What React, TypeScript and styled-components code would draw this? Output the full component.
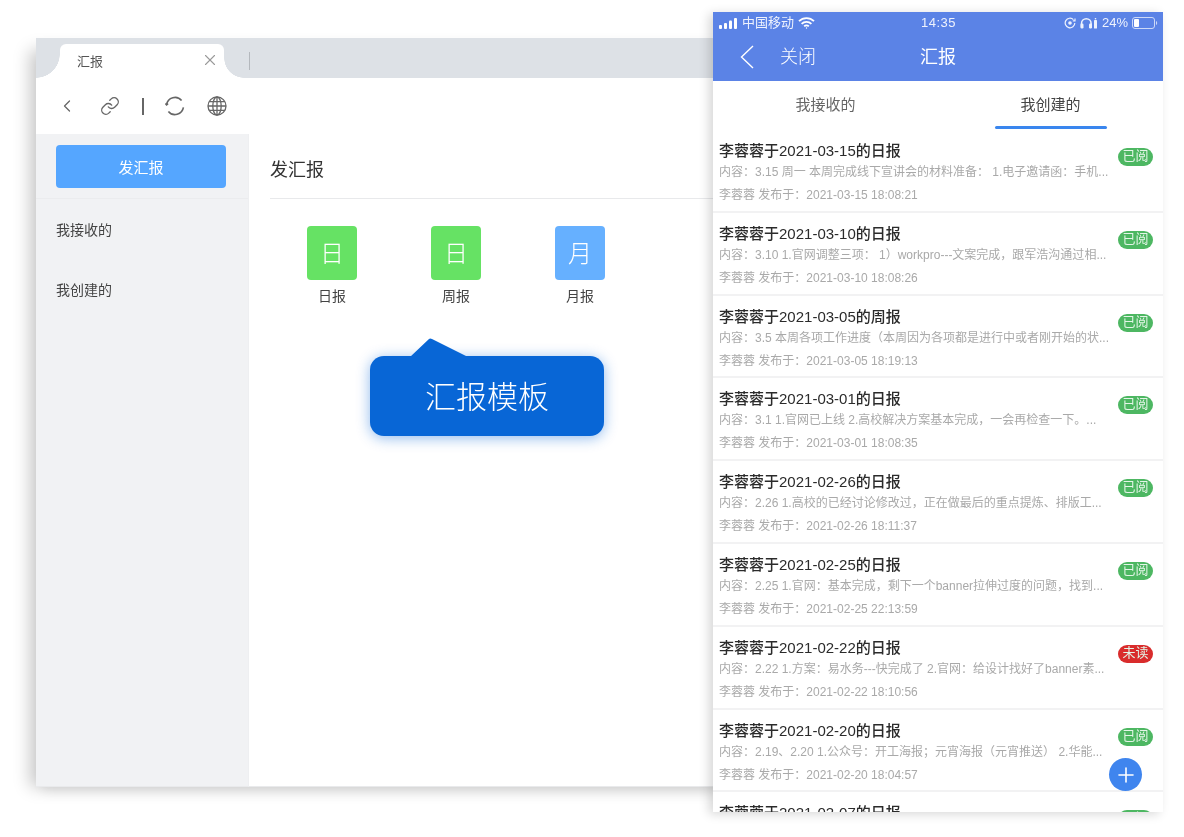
import { createGlobalStyle } from "styled-components";
import styled from "styled-components";
import { ChevronLeft, Link, Plus, X } from "lucide-react";

const SANS = `"Liberation Sans", "Noto Sans CJK SC", sans-serif`;

const GlobalStyle = createGlobalStyle`
  html, body {
    margin: 0;
    background: #fff;
    font-family: ${SANS};
  }
  * {
    box-sizing: border-box;
  }
`;

const Stage = styled.div`
  position: relative;
  width: 1184px;
  height: 837px;
  overflow: hidden;
  background: #fff;
  filter: blur(0.35px);
`;

const DesktopWindow = styled.div`
  position: absolute;
  left: 36px;
  top: 38px;
  width: 700px;
  height: 749px;
  display: flex;
  flex-direction: column;
  background: #fff;
  box-shadow: -12px 6px 16px -6px rgba(0, 0, 0, 0.22), 0 12px 12px -8px rgba(0, 0, 0, 0.07);
`;

const TabStrip = styled.div`
  height: 40px;
  flex: none;
  display: flex;
  align-items: flex-end;
  padding-left: 24px;
  background: #dde1e6;
`;

const Tab = styled.div`
  position: relative;
  width: 164px;
  height: 34px;
  display: flex;
  align-items: center;
  justify-content: space-between;
  padding: 0 5px 2px 17px;
  background: #fff;
  border-radius: 6px 6px 0 0;
  font-size: 13px;
  color: #555;

  &::before,
  &::after {
    content: "";
    position: absolute;
    bottom: 0;
  }
  &::before {
    left: -24px;
    width: 24px;
    height: 24px;
    background: radial-gradient(circle at 0 0, #dde1e6 23.5px, #fff 24px);
  }
  &::after {
    right: -20px;
    width: 20px;
    height: 20px;
    background: radial-gradient(circle at 100% 0, #dde1e6 19.5px, #fff 20px);
  }
`;

const TabDivider = styled.div`
  width: 1px;
  height: 18px;
  margin: 0 0 8px 25px;
  background: #b4b8bd;
`;

const ToolBar = styled.div`
  height: 56px;
  flex: none;
  display: flex;
  align-items: center;
  padding-left: 21px;
  color: #666;
`;

const ToolSlot = styled.div<{ $width: number }>`
  width: ${({ $width }) => $width}px;
  display: flex;
  align-items: center;
`;

const ToolBarRule = styled.div`
  width: 2px;
  height: 17px;
  background: #666;
`;

const Body = styled.div`
  flex: 1;
  display: flex;
  min-height: 0;
`;

const SideBar = styled.aside`
  width: 213px;
  flex: none;
  background: #f1f2f4;
  border-right: 1px solid #eeeff1;
  border-bottom: 1px solid #e9eaec;
`;

const SendZone = styled.div`
  height: 65px;
  padding: 11px 22px 0 20px;
  border-bottom: 1px solid #ebecee;
`;

const SendButton = styled.div`
  height: 43px;
  display: flex;
  align-items: center;
  justify-content: center;
  background: #55a6ff;
  border-radius: 4px;
  color: #fff;
  font-size: 15px;
`;

const SideList = styled.div`
  display: flex;
  flex-direction: column;
  padding: 0 20px;
`;

const SideItem = styled.div`
  height: 60px;
  display: flex;
  align-items: center;
  font-size: 14px;
  color: #444;
`;

const Main = styled.main`
  flex: 1;
  padding: 0 0 0 21px;
  border-bottom: 1px solid #e9eaec;
`;

const MainTitle = styled.h2`
  height: 65px;
  margin: 0;
  padding-top: 3px;
  display: flex;
  align-items: center;
  font-size: 18px;
  font-weight: 400;
  color: #333;
  border-bottom: 1px solid #e8e9eb;
`;

const TemplateRow = styled.div`
  display: flex;
  gap: 74px;
  padding: 27px 0 0 37px;
`;

const Template = styled.div`
  width: 50px;
  display: flex;
  flex-direction: column;
  align-items: center;
  gap: 6px;
`;

const TemplateIcon = styled.div<{ $color: string }>`
  width: 50px;
  height: 54px;
  padding-bottom: 3px;
  display: flex;
  align-items: center;
  justify-content: center;
  background: ${({ $color }) => $color};
  border-radius: 4px;
  color: #fff;
  font-size: 24px;
  font-weight: 300;
`;

const TemplateLabel = styled.div`
  font-size: 14px;
  line-height: 20px;
  color: #444;
`;

const Callout = styled.div`
  position: absolute;
  left: 370px;
  top: 356px;
  width: 234px;
  height: 80px;
  padding-bottom: 3px;
  display: flex;
  align-items: center;
  justify-content: center;
  background: #0866d6;
  border-radius: 14px;
  box-shadow: 0 2px 14px rgba(8, 102, 214, 0.45);
  color: #fff;
  font-size: 31px;
  font-weight: 300;
`;

const CalloutTail = styled.svg`
  position: absolute;
  left: 40px;
  top: -18px;
`;

const Phone = styled.div`
  position: absolute;
  left: 713px;
  top: 12px;
  width: 450px;
  height: 800px;
  display: flex;
  flex-direction: column;
  overflow: hidden;
  background: #fff;
  box-shadow: -4px 2px 10px rgba(0, 0, 0, 0.16);
`;

const PhoneHeader = styled.header`
  height: 69px;
  flex: none;
  display: flex;
  flex-direction: column;
  background: #5b83e6;
  color: #fff;
`;

const StatusBar = styled.div`
  height: 21px;
  display: grid;
  grid-template-columns: 1fr 1fr 1fr;
  align-items: center;
  padding: 1px 5px 0 6px;
  font-size: 13px;
  line-height: 16px;
  color: #eef2fd;
`;

const StatusGroup = styled.div<{ $end?: boolean }>`
  display: flex;
  align-items: center;
  gap: 4px;
  justify-content: ${({ $end }) => ($end ? "flex-end" : "flex-start")};
`;

const Carrier = styled.span`
  margin-bottom: 1px;
`;

const StatusTime = styled.div`
  text-align: center;
  font-size: 13px;
  letter-spacing: 0.5px;
`;

const NavBar = styled.div`
  flex: 1;
  position: relative;
  display: flex;
  align-items: center;
  padding: 0 0 0 27px;
`;

const NavClose = styled.div`
  margin-left: 26px;
  margin-bottom: 4px;
  font-size: 18px;
  font-weight: 300;
`;

const NavTitle = styled.div`
  position: absolute;
  left: 0;
  right: 0;
  top: 12px;
  text-align: center;
  font-size: 18px;
  line-height: 24px;
`;

const TabBar = styled.div`
  height: 49px;
  flex: none;
  display: grid;
  grid-template-columns: 1fr 1fr;
`;

const PhoneTab = styled.div<{ $active?: boolean }>`
  position: relative;
  display: flex;
  justify-content: center;
  padding-top: 14px;
  font-size: 15px;
  line-height: 20px;
  color: ${({ $active }) => ($active ? "#444" : "#666")};

  &::after {
    content: "";
    display: ${({ $active }) => ($active ? "block" : "none")};
    position: absolute;
    left: 57px;
    bottom: 1px;
    width: 112px;
    height: 3px;
    border-radius: 2px;
    background: #3a86ee;
  }
`;

const ReportList = styled.div`
  flex: 1;
  min-height: 0;
  overflow: hidden;
`;

const ReportRow = styled.div`
  height: 82.8px;
  display: flex;
  justify-content: space-between;
  padding: 11px 10px 0 6px;
  border-bottom: 2px solid #f2f2f3;
`;

const ReportText = styled.div`
  width: 392px;
  display: flex;
  flex-direction: column;
`;

const ReportTitle = styled.div`
  font-size: 15px;
  font-weight: 500;
  line-height: 20px;
  color: #2b2b2b;
`;

const ReportSummary = styled.div`
  margin-top: 2px;
  font-size: 12px;
  line-height: 18px;
  color: #a9a9a9;
  white-space: nowrap;
  overflow: hidden;
`;

const ReportMeta = styled.div`
  margin-top: 5px;
  font-size: 12px;
  line-height: 18px;
  color: #a9a9a9;
`;

const Badge = styled.div<{ $unread?: boolean }>`
  width: 35px;
  height: 18px;
  margin-top: 7px;
  padding-bottom: 2px;
  display: flex;
  align-items: center;
  justify-content: center;
  border-radius: 9px;
  background: ${({ $unread }) => ($unread ? "#d92c2c" : "#4db762")};
  color: #e3f5e7;
  font-size: 13px;
  line-height: 16px;
`;

const Fab = styled.div`
  position: absolute;
  left: 396px;
  top: 746px;
  width: 33px;
  height: 33px;
  display: flex;
  align-items: center;
  justify-content: center;
  border-radius: 50%;
  background: #3f85ee;
  color: #fff;
`;

const reports = [
  { date: "2021-03-15", kind: "日报", summary: "内容：3.15 周一 本周完成线下宣讲会的材料准备： 1.电子邀请函：手机...", time: "18:08:21" },
  { date: "2021-03-10", kind: "日报", summary: "内容：3.10 1.官网调整三项： 1）workpro---文案完成，跟军浩沟通过相...", time: "18:08:26" },
  { date: "2021-03-05", kind: "周报", summary: "内容：3.5 本周各项工作进度（本周因为各项都是进行中或者刚开始的状...", time: "18:19:13" },
  { date: "2021-03-01", kind: "日报", summary: "内容：3.1 1.官网已上线 2.高校解决方案基本完成，一会再检查一下。...", time: "18:08:35" },
  { date: "2021-02-26", kind: "日报", summary: "内容：2.26 1.高校的已经讨论修改过，正在做最后的重点提炼、排版工...", time: "18:11:37" },
  { date: "2021-02-25", kind: "日报", summary: "内容：2.25 1.官网：基本完成，剩下一个banner拉伸过度的问题，找到...", time: "22:13:59" },
  { date: "2021-02-22", kind: "日报", summary: "内容：2.22 1.方案：易水务---快完成了 2.官网：给设计找好了banner素...", time: "18:10:56", unread: true },
  { date: "2021-02-20", kind: "日报", summary: "内容：2.19、2.20 1.公众号：开工海报；元宵海报（元宵推送） 2.华能...", time: "18:04:57" },
  { date: "2021-02-07", kind: "日报", summary: "", time: "" },
];

const templates = [
  { glyph: "日", label: "日报", color: "#66e264" },
  { glyph: "日", label: "周报", color: "#66e264" },
  { glyph: "月", label: "月报", color: "#66b0ff" },
];

function RefreshIcon() {
  return (
    <svg width="20" height="20" viewBox="0 0 20 20" fill="none" stroke="#666" strokeWidth="1.6">
      <path d="M1.6 8.6 A8.5 8.5 0 0 1 16.6 4.6" />
      <path d="M18.4 11.4 A8.5 8.5 0 0 1 3.4 15.4" />
      <path d="M0.4 7.4 l1.2 1.4 1.5 -1.2" />
    </svg>
  );
}

function GlobeIcon() {
  return (
    <svg width="20" height="20" viewBox="0 0 20 20" fill="none" stroke="#666" strokeWidth="1.3">
      <circle cx="10" cy="10" r="9" />
      <ellipse cx="10" cy="10" rx="4.2" ry="9" />
      <path d="M10 1v18M1 10h18M2.2 5.6h15.6M2.2 14.4h15.6" />
    </svg>
  );
}

function BackChevron() {
  return (
    <svg width="14" height="24" viewBox="0 0 14 24" fill="none" stroke="#fff" strokeWidth="1.4">
      <path d="M13 1 L1.5 12 L13 23" />
    </svg>
  );
}

function SignalIcon() {
  return (
    <svg width="19" height="11" viewBox="0 0 19 11" fill="#fff">
      <rect x="0" y="7" width="3" height="4" rx="1" />
      <rect x="5" y="5" width="3" height="6" rx="1" />
      <rect x="10" y="2.5" width="3" height="8.5" rx="1" />
      <rect x="15" y="0" width="3" height="11" rx="1" />
    </svg>
  );
}

function WifiIcon() {
  return (
    <svg width="17" height="12" viewBox="0 0 17 12" fill="none" stroke="#fff" strokeWidth="1.8">
      <path d="M1 4.2a10.6 10.6 0 0 1 15 0" />
      <path d="M3.6 6.9a6.9 6.9 0 0 1 9.8 0" />
      <path d="M6.2 9.4a3.2 3.2 0 0 1 4.6 0" />
      <circle cx="8.5" cy="11" r="0.7" fill="#fff" stroke="none" />
    </svg>
  );
}

function LockRotationIcon() {
  return (
    <svg width="12" height="12" viewBox="0 0 12 12" fill="none" stroke="#eef2fd" strokeWidth="1.2">
      <path d="M10.8 6a4.8 4.8 0 1 1-1.4-3.4" />
      <path d="M11 1.6v2.2H8.8" />
      <circle cx="6" cy="6" r="1.8" fill="#eef2fd" stroke="none" />
    </svg>
  );
}

function HeadphoneIcon() {
  return (
    <svg width="18" height="12" viewBox="0 0 18 12" fill="none" stroke="#eef2fd" strokeWidth="1.5">
      <path d="M1.5 10V6.5a4.8 4.8 0 0 1 9.6 0V10" />
      <rect x="0.5" y="6.5" width="3" height="5" rx="1.2" fill="#eef2fd" stroke="none" />
      <rect x="9" y="6.5" width="3" height="5" rx="1.2" fill="#eef2fd" stroke="none" />
      <rect x="14" y="3" width="3" height="8.5" rx="0.6" fill="#eef2fd" stroke="none" />
      <rect x="14.8" y="1" width="1.4" height="1.4" fill="#eef2fd" stroke="none" />
    </svg>
  );
}

function BatteryIcon() {
  return (
    <svg width="26" height="12" viewBox="0 0 26 12" fill="none">
      <rect x="0.5" y="0.5" width="22" height="11" rx="2.5" stroke="#cdd9f7" />
      <rect x="2" y="2" width="5" height="8" rx="1" fill="#fff" />
      <path d="M24 4v4a2 2 0 0 0 1.2-2 2 2 0 0 0-1.2-2z" fill="#cdd9f7" />
    </svg>
  );
}

export default function App() {
  return (
    <Stage>
      <GlobalStyle />
      <DesktopWindow>
        <TabStrip>
          <Tab>
            汇报
            <X size={18} color="#9a9a9a" strokeWidth={1.5} />
          </Tab>
          <TabDivider />
        </TabStrip>
        <ToolBar>
          <ToolSlot $width={43}>
            <ChevronLeft size={20} strokeWidth={1.5} />
          </ToolSlot>
          <ToolSlot $width={42}>
            <Link size={20} strokeWidth={1.6} />
          </ToolSlot>
          <ToolSlot $width={23}>
            <ToolBarRule />
          </ToolSlot>
          <ToolSlot $width={42}>
            <RefreshIcon />
          </ToolSlot>
          <ToolSlot $width={20}>
            <GlobeIcon />
          </ToolSlot>
        </ToolBar>
        <Body>
          <SideBar>
            <SendZone>
              <SendButton>发汇报</SendButton>
            </SendZone>
            <SideList>
              <SideItem>我接收的</SideItem>
              <SideItem>我创建的</SideItem>
            </SideList>
          </SideBar>
          <Main>
            <MainTitle>发汇报</MainTitle>
            <TemplateRow>
              {templates.map((t) => (
                <Template key={t.label}>
                  <TemplateIcon $color={t.color}>{t.glyph}</TemplateIcon>
                  <TemplateLabel>{t.label}</TemplateLabel>
                </Template>
              ))}
            </TemplateRow>
          </Main>
        </Body>
      </DesktopWindow>

      <Callout>
        <CalloutTail width="58" height="19" viewBox="0 0 58 19">
          <path d="M0 19 L19 1 Q20 0 22 1 L58 19 Z" fill="#0866d6" />
        </CalloutTail>
        汇报模板
      </Callout>

      <Phone>
        <PhoneHeader>
          <StatusBar>
            <StatusGroup>
              <SignalIcon />
              <Carrier>中国移动</Carrier>
              <WifiIcon />
            </StatusGroup>
            <StatusTime>14:35</StatusTime>
            <StatusGroup $end>
              <LockRotationIcon />
              <HeadphoneIcon />
              24%
              <BatteryIcon />
            </StatusGroup>
          </StatusBar>
          <NavBar>
            <BackChevron />
            <NavClose>关闭</NavClose>
            <NavTitle>汇报</NavTitle>
          </NavBar>
        </PhoneHeader>
        <TabBar>
          <PhoneTab>我接收的</PhoneTab>
          <PhoneTab $active>我创建的</PhoneTab>
        </TabBar>
        <ReportList>
          {reports.map((r) => (
            <ReportRow key={r.date}>
              <ReportText>
                <ReportTitle>
                  李蓉蓉于{r.date}的{r.kind}
                </ReportTitle>
                <ReportSummary>{r.summary}</ReportSummary>
                <ReportMeta>
                  李蓉蓉 发布于：{r.date} {r.time}
                </ReportMeta>
              </ReportText>
              <Badge $unread={r.unread}>{r.unread ? "未读" : "已阅"}</Badge>
            </ReportRow>
          ))}
        </ReportList>
        <Fab>
          <Plus size={24} strokeWidth={1.6} />
        </Fab>
      </Phone>
    </Stage>
  );
}
